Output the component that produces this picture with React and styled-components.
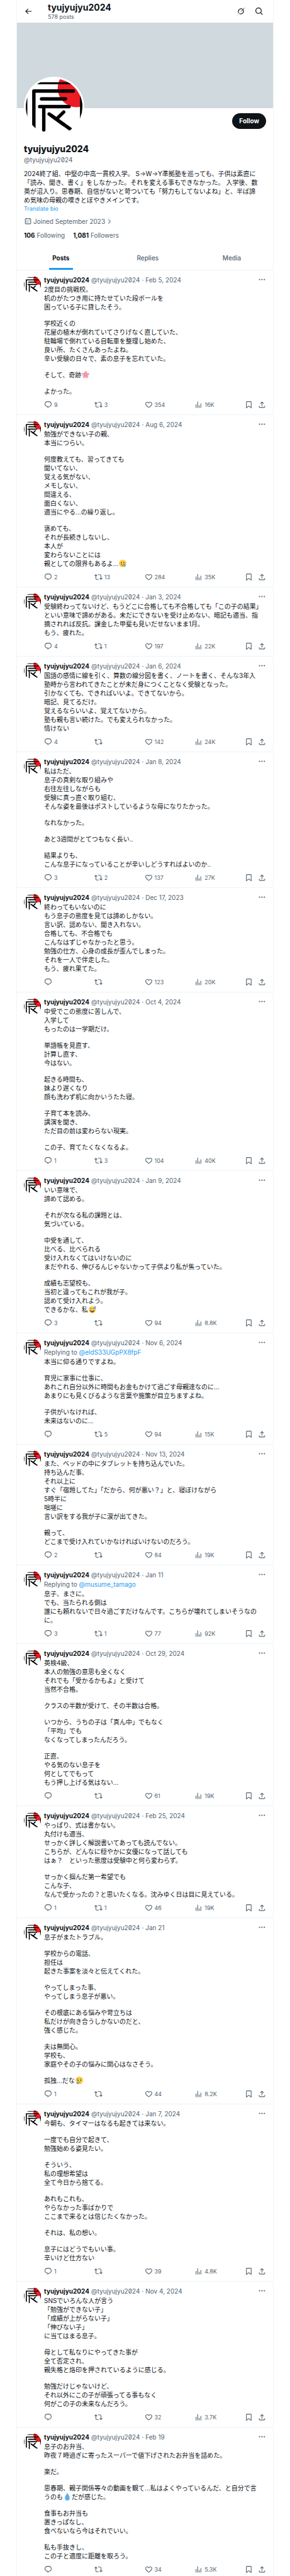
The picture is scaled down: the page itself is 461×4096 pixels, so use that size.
import styled, { createGlobalStyle } from "styled-components"

const GlobalStyle = createGlobalStyle`
  :root {
    --color-text: #0f1419;
    --color-muted: #536471;
    --color-link: #1d9bf0;
    --color-line: #eff3f4;
    --color-banner: #cfd9de;
  }

  *,
  *::before,
  *::after {
    box-sizing: border-box;
    margin: 0;
    padding: 0;
  }

  body {
    background-color: #fff;
    color: var(--color-text);
    font-family: Inter, "Noto Sans CJK JP", sans-serif;
    font-size: 10px;
    line-height: 14px;
  }

  a {
    color: inherit;
    text-decoration: none;
  }

  button {
    background: none;
    border: none;
    color: inherit;
    cursor: pointer;
    font: inherit;
  }
`

const Page = styled.div`
  padding: 0 26px;
`

const Column = styled.main`
  border-left: 1px solid var(--color-line);
  border-right: 1px solid var(--color-line);
`

const TopBar = styled.header`
  display: flex;
  align-items: center;
  height: 36px;
  padding: 0 15px 0 11px;
`

const TopBarTitle = styled.div`
  flex: 1;
  padding-left: 24px;

  h1 {
    font-size: 14px;
    font-weight: 700;
    line-height: 18px;
  }

  p {
    font-size: 9px;
    line-height: 12px;
    color: var(--color-muted);
  }
`

const IconButton = styled.button`
  display: flex;
  align-items: center;
  color: ${(props) => (props.$muted ? "var(--color-muted)" : "inherit")};
`

const TopBarActions = styled.div`
  display: flex;
  gap: 15px;
`

const StyledIcon = styled.svg`
  display: block;
  flex: none;
  width: ${(props) => props.$size}px;
  height: ${(props) => props.$size}px;
  fill: currentColor;
`

const Banner = styled.div`
  aspect-ratio: 3 / 1;
  background-color: var(--color-banner);
`

const Profile = styled.section`
  padding: 8px 11px 12px;
`

const ProfileTop = styled.div`
  display: flex;
  align-items: flex-start;
  justify-content: space-between;
  margin-bottom: 10px;
`

const ProfileAvatar = styled.a`
  display: block;
  width: 96px;
  height: 96px;
  margin-top: -58px;
  padding: 3px;
  border-radius: 50%;
  background-color: #fff;
`

const StyledAvatar = styled.svg`
  display: block;
  width: 100%;
  border-radius: 50%;
  background-color: #fff;
`

const FollowButton = styled.button`
  height: 25px;
  padding: 0 11px;
  border-radius: 13px;
  background-color: var(--color-text);
  color: #fff;
  font-weight: 700;
`

const ProfileName = styled.h2`
  font-size: 14px;
  font-weight: 800;
  line-height: 18px;
`

const Handle = styled.span`
  color: var(--color-muted);
  font-variant-numeric: slashed-zero;
`

const ProfileHandle = styled.p`
  margin-bottom: 8px;
  padding-top: 1px;
`

const TranslateButton = styled.button`
  display: block;
  color: var(--color-link);
  font-size: 9px;
  line-height: 14px;
`

const Joined = styled.a`
  display: flex;
  align-items: center;
  gap: 2px;
  margin: 6px 0 8px;
  color: var(--color-muted);
`

const Counts = styled.div`
  display: flex;
  gap: 13px;
  color: var(--color-muted);

  strong {
    color: var(--color-text);
    font-weight: 700;
  }
`

const Tabs = styled.nav`
  display: flex;
  border-bottom: 1px solid var(--color-line);
`

const Tab = styled.a`
  flex: 1 1 auto;
  display: flex;
  justify-content: center;
  color: ${(props) => (props.$active ? "var(--color-text)" : "var(--color-muted)")};
  font-weight: ${(props) => (props.$active ? 700 : 500)};

  span {
    min-width: ${(props) => (props.$active ? 38 : 0)}px;
    padding: 10px 0 9px;
    border-bottom: 3px solid
      ${(props) => (props.$active ? "var(--color-link)" : "transparent")};
    text-align: center;
  }
`

const StyledPost = styled.article`
  display: flex;
  gap: 5px;
  padding: 8px 11px;
  border-bottom: 1px solid var(--color-line);
`

const PostAvatar = styled.a`
  flex: none;
  width: 27px;
  height: 27px;
  margin-top: 1px;
`

const PostContent = styled.div`
  flex: 1;
  min-width: 0;
`

const PostHeader = styled.div`
  display: flex;
  align-items: center;
  gap: 3px;
  height: 14px;
  margin-bottom: 1px;
  color: var(--color-muted);
  white-space: nowrap;

  ${IconButton} {
    margin-left: auto;
  }
`

const Author = styled.a`
  color: var(--color-text);
  font-weight: 700;
`

const ReplyingTo = styled.p`
  margin-bottom: 1px;
  color: var(--color-muted);

  a {
    color: var(--color-link);
  }
`

const StyledText = styled.div`
  display: flex;
  flex-direction: column;
  gap: 12px;
`

const Line = styled.span`
  display: block;
`

const EmojiIcon = styled.svg`
  display: inline-block;
  width: 12px;
  height: 12px;
  margin: 0 1px;
  vertical-align: -2px;
`

const PostActions = styled.div`
  display: flex;
  align-items: center;
  height: 14px;
  margin-top: 8px;
  color: var(--color-muted);
`

const Action = styled.div`
  flex: 1;
  display: flex;

  button {
    display: flex;
    align-items: center;
    gap: 3px;
    font-size: 9px;
  }
`

const EndActions = styled.div`
  display: flex;
  gap: 8px;
`

const icons = {
  back: "M7.414 13l5.043 5.04-1.414 1.42L3.586 12l7.457-7.46 1.414 1.42L7.414 11H21v2H7.414z",
  search:
    "M10.25 3.75c-3.59 0-6.5 2.91-6.5 6.5s2.91 6.5 6.5 6.5c1.795 0 3.419-.726 4.596-1.904 1.178-1.177 1.904-2.801 1.904-4.596 0-3.59-2.91-6.5-6.5-6.5zm-8.5 6.5c0-4.694 3.806-8.5 8.5-8.5s8.5 3.806 8.5 8.5c0 1.986-.682 3.815-1.824 5.262l4.781 4.781-1.414 1.414-4.781-4.781c-1.447 1.142-3.276 1.824-5.262 1.824-4.694 0-8.5-3.806-8.5-8.5z",
  grok: "M1 23.5L5.2 16.8A8.6 8.6 0 0 1 17 5.1L15.6 6.8A6.5 6.5 0 0 0 6.7 15.3ZM9.2 15.2L23.3 .5L18.7 7.2A8.6 8.6 0 0 1 6.9 18.9L8.4 17.2A6.5 6.5 0 0 0 17.5 8.6Z",
  calendar:
    "M7 4V3h2v1h6V3h2v1h1.5C19.89 4 21 5.12 21 6.5v12c0 1.38-1.11 2.5-2.5 2.5h-13C4.12 21 3 19.88 3 18.5v-12C3 5.12 4.12 4 5.5 4H7zm0 2H5.5c-.27 0-.5.22-.5.5v12c0 .28.23.5.5.5h13c.28 0 .5-.22.5-.5v-12c0-.28-.22-.5-.5-.5H17v1h-2V6H9v1H7V6zm0 6h2v-2H7v2zm0 4h2v-2H7v2zm4-4h2v-2h-2v2zm0 4h2v-2h-2v2zm4-4h2v-2h-2v2z",
  chevron: "M8.3 3.3L17 12L8.3 20.7L6.8 19.2L14 12L6.8 4.8Z",
  more: "M3 12c0-1.1.9-2 2-2s2 .9 2 2-.9 2-2 2-2-.9-2-2zm9 2c1.1 0 2-.9 2-2s-.9-2-2-2-2 .9-2 2 .9 2 2 2zm7 0c1.1 0 2-.9 2-2s-.9-2-2-2-2 .9-2 2 .9 2 2 2z",
  reply:
    "M1.751 10c0-4.42 3.584-8 8.005-8h4.366c4.49 0 8.129 3.64 8.129 8.13 0 2.96-1.607 5.68-4.196 7.11l-8.054 4.46v-3.69h-.067c-4.49.1-8.183-3.51-8.183-8.01zm8.005-6c-3.317 0-6.005 2.69-6.005 6 0 3.37 2.77 6.08 6.138 6.01l.351-.01h1.761v2.3l5.087-2.81c1.951-1.08 3.163-3.13 3.163-5.36 0-3.39-2.744-6.13-6.129-6.13H9.756z",
  repost:
    "M4.5 3.88l4.432 4.14-1.364 1.46L5.5 7.55V16c0 1.1.896 2 2 2H13v2H7.5c-2.209 0-4-1.79-4-4V7.55L1.432 9.48.068 8.02 4.5 3.88zM16.5 6H11V4h5.5c2.209 0 4 1.79 4 4v8.45l2.068-1.93 1.364 1.46-4.432 4.14-4.432-4.14 1.364-1.46 2.068 1.93V8c0-1.1-.896-2-2-2z",
  like: "M16.697 5.5c-1.222-.06-2.679.51-3.89 2.16l-.805 1.09-.806-1.09C9.984 6.01 8.526 5.44 7.304 5.5c-1.243.07-2.349.78-2.91 1.91-.552 1.12-.633 2.78.479 4.82 1.074 1.97 3.257 4.27 7.129 6.61 3.87-2.34 6.052-4.64 7.126-6.61 1.111-2.04 1.03-3.7.477-4.82-.561-1.13-1.666-1.84-2.908-1.91zm4.187 7.69c-1.351 2.48-4.001 5.12-8.379 7.67l-.503.3-.504-.3c-4.379-2.55-7.029-5.19-8.382-7.67-1.36-2.5-1.41-4.86-.514-6.67.887-1.79 2.647-2.91 4.601-3.01 1.651-.09 3.368.56 4.798 2.01 1.429-1.45 3.146-2.1 4.796-2.01 1.954.1 3.714 1.22 4.601 3.01.896 1.81.846 4.17-.514 6.67z",
  views: "M8.75 21V3h2v18h-2zM18 21V8.5h2V21h-2zM4 21l.004-10h2L6 21H4zm9.248 0v-7h2v7h-2z",
  bookmark:
    "M4 4.5C4 3.12 5.119 2 6.5 2h11C18.881 2 20 3.12 20 4.5v18.44l-8-5.71-8 5.71V4.5zM6.5 4c-.276 0-.5.22-.5.5v14.56l6-4.29 6 4.29V4.5c0-.28-.224-.5-.5-.5h-11z",
  share:
    "M12 2.59l5.7 5.7-1.41 1.42L13 6.41V16h-2V6.41l-3.3 3.3-1.41-1.42L12 2.59zM21 15l-.02 3.51c0 1.38-1.12 2.49-2.5 2.49H5.5C4.11 21 3 19.88 3 18.5V15h2v3.5c0 .28.22.5.5.5h12.98c.28 0 .5-.22.5-.5L19 15h2z",
}

function Icon({ name, size = 13 }) {
  return (
    <StyledIcon viewBox="0 0 24 24" $size={size} aria-hidden="true">
      <path d={icons[name]} />
    </StyledIcon>
  )
}

function Avatar() {
  return (
    <StyledAvatar viewBox="42 9 400 400" role="img" aria-label="tyujyujyu2024">
      <circle cx="401" cy="77" r="134" fill="#ec1c24" />
      <g fill="none" stroke="#000" strokeWidth="24" strokeLinecap="round" strokeLinejoin="round">
        <path d="M90 42H400" strokeWidth="14" />
        <path d="M99 400V97H378M153 152H322M140 207H348M169 207V371" />
        <path d="M207 259L310 334M262 292L310 245" />
        <path d="M220 268L362 370" strokeLinecap="butt" />
        <path d="M434 110V330M44 130V300" strokeWidth="18" />
      </g>
    </StyledAvatar>
  )
}

const emojis = {
  "🌸": (
    <>
      {[0, 72, 144, 216, 288].map((angle) => (
        <ellipse key={angle} cx="18" cy="8" rx="6.5" ry="8" fill="#f0a3b8" transform={`rotate(${angle} 18 18)`} />
      ))}
      <circle cx="18" cy="18" r="6" fill="#e0607e" />
      <circle cx="18" cy="18" r="4" fill="#fcd277" />
    </>
  ),
  "🥲": (
    <>
      <circle cx="18" cy="18" r="18" fill="#ffcc4d" />
      <ellipse cx="12" cy="14" rx="2.5" ry="3.5" fill="#664500" />
      <ellipse cx="24" cy="14" rx="2.5" ry="3.5" fill="#664500" />
      <path d="M9 22q9 9 18 0" fill="none" stroke="#664500" strokeWidth="2.5" />
      <path d="M27 18q6 8 5 11a5 5 0 0 1-10 0q0-3 5-11z" fill="#5dadec" />
    </>
  ),
  "😅": (
    <>
      <circle cx="17" cy="19" r="17" fill="#ffcc4d" />
      <path d="M7 15q3-4 7 0M20 15q3-4 7 0" fill="none" stroke="#664500" strokeWidth="2.5" />
      <path d="M6 21h22q-1 11-11 11T6 21z" fill="#664500" />
      <path d="M9 22h16v3H9z" fill="#fff" />
      <path d="M30 0q6 8 5 11a5 5 0 0 1-10 0q0-3 5-11z" fill="#5dadec" />
    </>
  ),
  "😢": (
    <>
      <circle cx="18" cy="18" r="18" fill="#ffcc4d" />
      <ellipse cx="12" cy="17" rx="2.5" ry="3.5" fill="#664500" />
      <ellipse cx="25" cy="17" rx="2.5" ry="3.5" fill="#664500" />
      <path d="M6 11q4-1 6-4M24 7q2 3 6 4M13 28q5-5 10 0" fill="none" stroke="#664500" strokeWidth="2" />
      <path d="M10 22q6 7 5 10a5 5 0 0 1-10 0q0-3 5-10z" fill="#5dadec" />
    </>
  ),
  "💧": <path d="M18 0q12 16 11 25a11 11 0 0 1-22 0Q6 16 18 0z" fill="#5dadec" />,
}

function RichText({ text }) {
  return text.split(/(🌸|🥲|😅|😢|💧)/u).map((part, i) =>
    emojis[part] ? (
      <EmojiIcon key={i} viewBox="0 0 36 36" role="img" aria-label={part}>
        {emojis[part]}
      </EmojiIcon>
    ) : (
      part
    )
  )
}

// Blank lines split the text into paragraphs, single breaks into lines
function TextBlock({ text }) {
  return (
    <StyledText lang="ja">
      {text.split("\n\n").map((paragraph, i) => (
        <p key={i}>
          {paragraph.split("\n").map((line, j) => (
            <Line key={j}>
              <RichText text={line} />
            </Line>
          ))}
        </p>
      ))}
    </StyledText>
  )
}

const bio = `2024終了組、中堅の中高一貫校入学。 S→W→Y準拠塾を巡っても、子供は素直に
「読み、聞き、書く」をしなかった。それを変える事もできなかった。 入学後、数
英が沼入り。思春期、自信がないと苛ついても「努力もしてないよね」と、半ば諦
め気味の母親の嘆きとぼやきメインです。`

const posts = [
  {
    date: "Feb 5, 2024",
    replies: "9",
    reposts: "3",
    likes: "354",
    views: "16K",
    text: `2度目の挑戦校。
机のがたつき用に持たせていた段ボールを
困っている子に貸したそう。

学校近くの
花屋の植木が倒れていてさりげなく直していた、
駐輪場で倒れている自転車を整理し始めた、
良い所、たくさんあったよね。
辛い受験の日々で、素の息子を忘れていた。

そして、奇跡🌸

よかった。`,
  },
  {
    date: "Aug 6, 2024",
    replies: "2",
    reposts: "13",
    likes: "284",
    views: "35K",
    text: `勉強ができない子の親、
本当につらい。

何度教えても、習ってきても
聞いてない、
覚える気がない、
メモしない、
間違える、
面白くない、
適当にやる...の繰り返し。

褒めても、
それが長続きしないし、
本人が
変わらないことには
親としての限界もあるよ...🥲`,
  },
  {
    date: "Jan 3, 2024",
    replies: "4",
    reposts: "1",
    likes: "197",
    views: "22K",
    text: `受験終わってないけど、もうどこに合格しても不合格しても「この子の結果」
といい意味で諦めがある。未だにできないを受け止めない、暗記も適当、指
摘されれば反抗。課金した甲斐も見いだせないまま1月。
もう、疲れた。`,
  },
  {
    date: "Jan 6, 2024",
    replies: "4",
    likes: "142",
    views: "24K",
    text: `国語の感情に線を引く、算数の線分図を書く、ノートを書く、そんな3年入
塾時から言われてきたことが未だ身につくことなく受験となった。
引かなくても、できればいいよ。できてないから。
暗記、見てるだけ。
覚えるならいいよ、覚えてないから。
塾も親も言い続けた。でも変えられなかった。
情けない`,
  },
  {
    date: "Jan 8, 2024",
    replies: "3",
    reposts: "2",
    likes: "137",
    views: "27K",
    text: `私はただ、
息子の真剣な取り組みや
右往左往しながらも
受験に真っ直ぐ取り組む、
そんな姿を最後はポストしているような母になりたかった。

なれなかった。

あと3週間がとてつもなく長い..

結果よりも、
こんな息子になっていることが辛いしどうすればよいのか..`,
  },
  {
    date: "Dec 17, 2023",
    likes: "123",
    views: "20K",
    text: `終わってもいないのに
もう息子の態度を見ては諦めしかない。
言い訳、認めない、聞き入れない。
合格しても、不合格でも
こんなはずじゃなかったと思う。
勉強の仕方、心身の成長が歪んでしまった。
それを一人で伴走した。
もう、疲れ果てた。`,
  },
  {
    date: "Oct 4, 2024",
    replies: "1",
    reposts: "3",
    likes: "104",
    views: "40K",
    text: `中受でこの態度に苦しんで、
入学して
もったのは一学期だけ。

単語帳を見直す、
計算し直す、
今はない。

起きる時間も、
妹より遅くなり
顔も洗わず机に向かいうたた寝。

子育て本を読み、
講演を聞き、
ただ目の前は変わらない現実。

この子、育てたくなくなるよ。`,
  },
  {
    date: "Jan 9, 2024",
    replies: "3",
    likes: "94",
    views: "8.8K",
    text: `いい意味で、
諦めて認める。

それが次なる私の課題とは、
気づいている。

中受を通して、
比べる、比べられる
受け入れなくてはいけないのに
まだやれる、伸びるんじゃないかって子供より私が焦っていた。

成績も志望校も、
当初と違ってもこれが我が子。
認めて受け入れよう。
できるかな、私😅`,
  },
  {
    date: "Nov 6, 2024",
    replyingTo: "@eldS33UGpPX8fpF",
    reposts: "5",
    likes: "94",
    views: "15K",
    text: `本当に仰る通りですよね。

育児に家事に仕事に、
あれこれ自分以外に時間もお金もかけて過ごす母親達なのに...
あまりにも見くびるような言葉や施策が目立ちますよね。

子供がいなければ、
未来はないのに...`,
  },
  {
    date: "Nov 13, 2024",
    replies: "2",
    likes: "84",
    views: "19K",
    text: `また、ベッドの中にタブレットを持ち込んでいた。
持ち込んだ事、
それ以上に
すぐ「宿題してた」「だから、何が悪い？」と、寝ぼけながら
5時半に
咄嗟に
言い訳をする我が子に涙が出てきた。

親って、
どこまで受け入れていかなければいけないのだろう。`,
  },
  {
    date: "Jan 11",
    replyingTo: "@musume_tamago",
    replies: "3",
    reposts: "1",
    likes: "77",
    views: "92K",
    text: `息子、まさに。
でも、当たられる側は
誰にも頼れないで日々過ごすだけなんです。こちらが壊れてしまいそうなの
に。`,
  },
  {
    date: "Oct 29, 2024",
    likes: "61",
    views: "19K",
    text: `英検4級、
本人の勉強の意思も全くなく
それでも「受かるかもよ」と受けて
当然不合格。

クラスの半数が受けて、その半数は合格。

いつから、うちの子は「真ん中」でもなく
「平均」でも
なくなってしまったんだろう。

正直、
やる気のない息子を
何としてでもって
もう押し上げる気はない...`,
  },
  {
    date: "Feb 25, 2024",
    replies: "1",
    reposts: "1",
    likes: "46",
    views: "19K",
    text: `やっぱり、式は書かない。
丸付けも適当、
せっかく詳しく解説書いてあっても読んでない。
こちらが、どんなに穏やかに女優になって話しても
はぁ？　といった態度は受験中と何ら変わらず。

せっかく掴んだ第一希望でも
こんな子、
なんで受かったの？と思いたくなる。沈みゆく日は目に見えている。`,
  },
  {
    date: "Jan 21",
    replies: "1",
    likes: "44",
    views: "8.2K",
    text: `息子がまたトラブル。

学校からの電話、
担任は
起きた事案を淡々と伝えてくれた。

やってしまった事、
やってしまう息子が悪い。

その根底にある悩みや苛立ちは
私だけが向き合うしかないのだと、
強く感じた。

夫は無関心。
学校も、
家庭やその子の悩みに関心はなさそう。

孤独...だな😢`,
  },
  {
    date: "Jan 7, 2024",
    replies: "1",
    likes: "39",
    views: "4.8K",
    text: `今朝も、タイマーはなるも起きては来ない。

一度でも自分で起きて、
勉強始める姿見たい。

そういう、
私の理想希望は
全て今日から捨てる。

あれもこれも、
やらなかった事ばかりで
ここまで来るとは信じたくなかった。

それは、私の想い。

息子にはどうでもいい事。
辛いけど仕方ない`,
  },
  {
    date: "Nov 4, 2024",
    likes: "32",
    views: "3.7K",
    text: `SNSでいろんな人が言う
「勉強ができない子」
「成績が上がらない子」
「伸びない子」
に当てはまる息子。

母として私なりにやってきた事が
全て否定され、
親失格と烙印を押されているように感じる。

勉強だけじゃないけど、
それ以外にこの子が頑張ってる事もなく
何がこの子の未来なんだろう。`,
  },
  {
    date: "Feb 19",
    likes: "34",
    views: "5.3K",
    text: `息子のお弁当、
昨夜７時過ぎに寄ったスーパーで値下げされたお弁当を詰めた。

楽だ。

思春期、親子関係等々の動画を観て...私はよくやっているんだ、と自分で言
うのも💧だが感じた。

食事もお弁当も
置きっぱなし、
食べないなら今はそれでいい。

私も手抜きし、
この子と適度に距離を取ろう。`,
  },
]

function PostAction({ icon, label, count }) {
  return (
    <Action>
      <button type="button" aria-label={count ? `${count} ${label}` : label}>
        <Icon name={icon} />
        {count}
      </button>
    </Action>
  )
}

function Post({ post }) {
  return (
    <StyledPost>
      <PostAvatar href="#profile">
        <Avatar />
      </PostAvatar>
      <PostContent>
        <PostHeader>
          <Author href="#profile">tyujyujyu2024</Author>
          <Handle>@tyujyujyu2024</Handle>
          <span>·</span>
          <a href="#post">{post.date}</a>
          <IconButton type="button" aria-label="More" $muted>
            <Icon name="more" />
          </IconButton>
        </PostHeader>
        {post.replyingTo && (
          <ReplyingTo>
            Replying to <a href="#reply">{post.replyingTo}</a>
          </ReplyingTo>
        )}
        <TextBlock text={post.text} />
        <PostActions>
          <PostAction icon="reply" label="Replies" count={post.replies} />
          <PostAction icon="repost" label="Reposts" count={post.reposts} />
          <PostAction icon="like" label="Likes" count={post.likes} />
          <PostAction icon="views" label="Views" count={post.views} />
          <EndActions>
            <IconButton type="button" aria-label="Bookmark">
              <Icon name="bookmark" />
            </IconButton>
            <IconButton type="button" aria-label="Share">
              <Icon name="share" />
            </IconButton>
          </EndActions>
        </PostActions>
      </PostContent>
    </StyledPost>
  )
}

function App() {
  return (
    <>
      <GlobalStyle />
      <Page>
        <Column>
          <TopBar>
            <IconButton type="button" aria-label="Back">
              <Icon name="back" size={14} />
            </IconButton>
            <TopBarTitle>
              <h1>tyujyujyu2024</h1>
              <p>578 posts</p>
            </TopBarTitle>
            <TopBarActions>
              <IconButton type="button" aria-label="Profile summary">
                <Icon name="grok" size={14} />
              </IconButton>
              <IconButton type="button" aria-label="Search">
                <Icon name="search" size={14} />
              </IconButton>
            </TopBarActions>
          </TopBar>
          <Banner />
          <Profile id="profile">
            <ProfileTop>
              <ProfileAvatar href="#photo">
                <Avatar />
              </ProfileAvatar>
              <FollowButton type="button">Follow</FollowButton>
            </ProfileTop>
            <ProfileName>tyujyujyu2024</ProfileName>
            <ProfileHandle>
              <Handle>@tyujyujyu2024</Handle>
            </ProfileHandle>
            <TextBlock text={bio} />
            <TranslateButton type="button">Translate bio</TranslateButton>
            <Joined href="#about">
              <Icon name="calendar" />
              Joined September 2023
              <Icon name="chevron" size={10} />
            </Joined>
            <Counts>
              <a href="#following">
                <strong>106</strong> Following
              </a>
              <a href="#followers">
                <strong>1,081</strong> Followers
              </a>
            </Counts>
          </Profile>
          <Tabs>
            <Tab href="#posts" $active aria-current="page">
              <span>Posts</span>
            </Tab>
            <Tab href="#replies">
              <span>Replies</span>
            </Tab>
            <Tab href="#media">
              <span>Media</span>
            </Tab>
          </Tabs>
          {posts.map((post, i) => (
            <Post key={i} post={post} />
          ))}
        </Column>
      </Page>
    </>
  )
}

export default App
